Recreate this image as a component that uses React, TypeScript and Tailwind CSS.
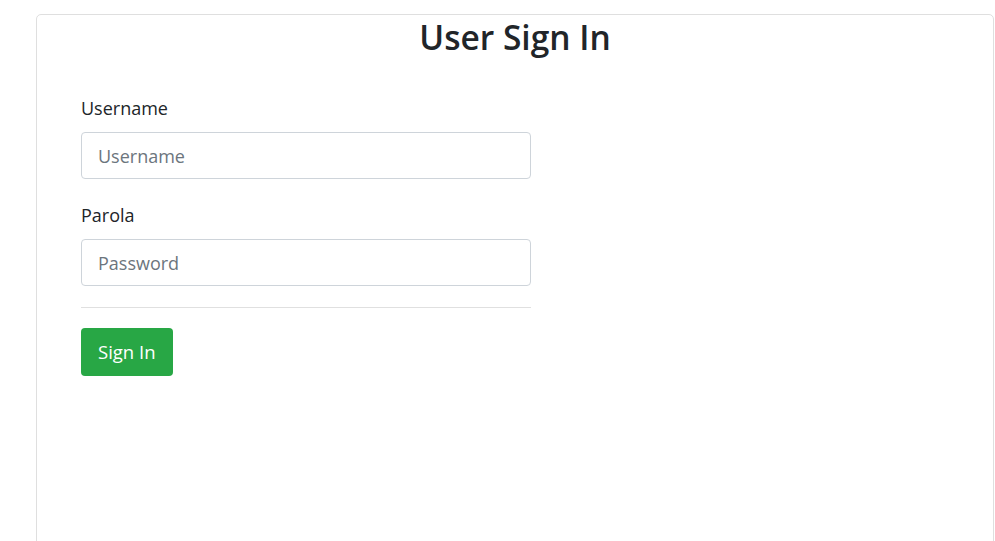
export default function App() {
  return (
    <div className="h-[541px] bg-white text-[#212529] font-['Open_Sans',sans-serif] overflow-hidden">
      <div className="ml-[36px] mt-[14px] w-[958px] h-[600px] border border-[#dfdfdf] rounded-[5px]">
        <h2 className="text-center text-[33.5px] font-semibold leading-[1.2] mt-[2px]">User Sign In</h2>
        <form className="ml-[44px] w-[450px] mt-[38px]">
          <div className="mb-[23px]">
            <label className="block text-[18px] leading-[27px] mb-[10px]">Username</label>
            <input
              type="text"
              placeholder="Username"
              className="block w-full h-[47px] px-[16px] text-[18px] border border-[#ced4da] rounded-[4px] placeholder:text-[#6c757d] outline-none"
            />
          </div>
          <div className="mb-[21px]">
            <label className="block text-[18px] leading-[27px] mb-[10px]">Parola</label>
            <input
              type="password"
              placeholder="Password"
              className="block w-full h-[47px] px-[16px] text-[18px] border border-[#ced4da] rounded-[4px] placeholder:text-[#6c757d] outline-none"
            />
          </div>
          <hr className="border-0 border-t border-[#e0e0e0] mb-[20px]" />
          <button
            type="button"
            className="h-[48px] px-[17px] text-[18.5px] text-white bg-[#28a745] rounded-[4px]"
          >
            Sign In
          </button>
        </form>
      </div>
    </div>
  );
}
